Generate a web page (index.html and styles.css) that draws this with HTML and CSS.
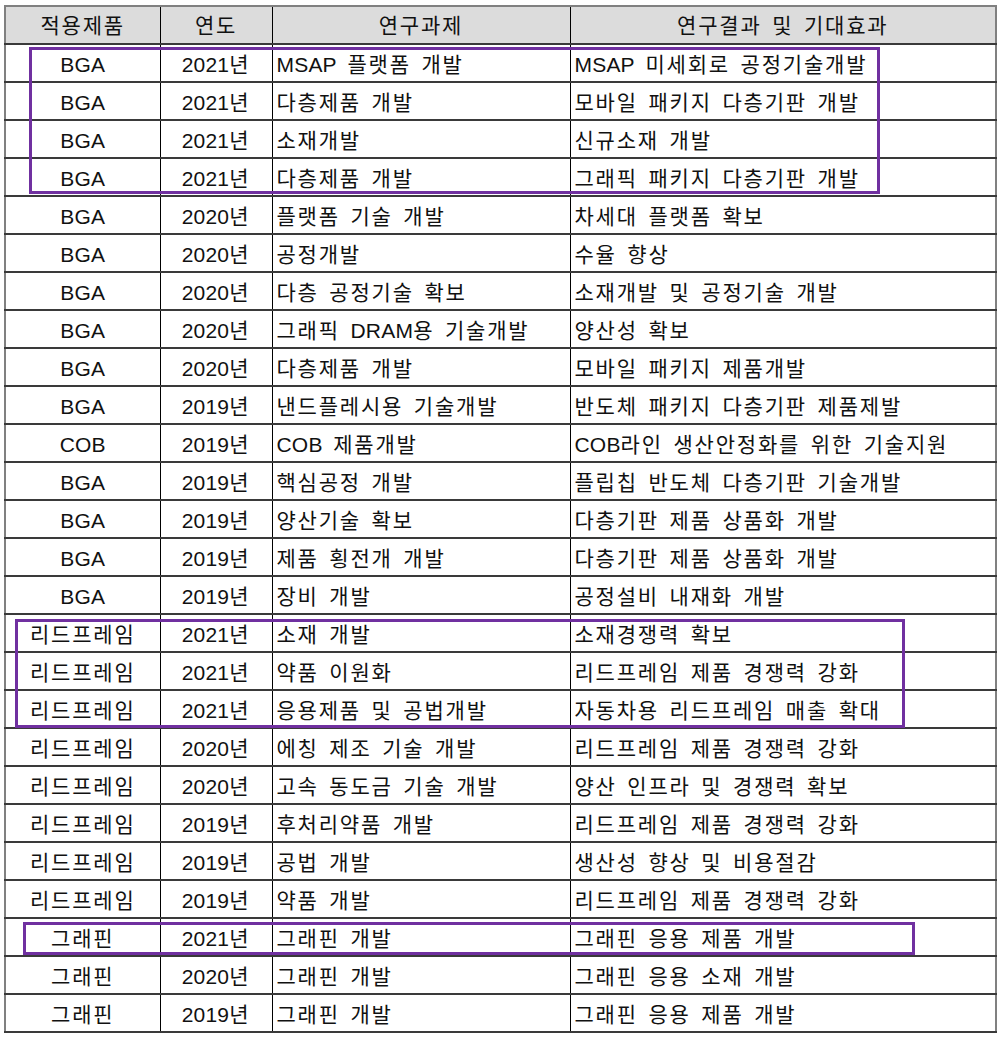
FILE: index.html
```html
<!DOCTYPE html>
<html lang="ko">
<head>
<meta charset="utf-8">
<link rel="stylesheet" href="styles.css">
</head>
<body>
<div class="wrap">
<table class="grid">
<colgroup><col class="c1"><col class="c2"><col class="c3"><col class="c4"></colgroup>
<thead>
<tr><th>적용제품</th><th>연도</th><th>연구과제</th><th>연구결과 및 기대효과</th></tr>
</thead>
<tbody>
<tr><td><span class="lat">BGA</span></td><td><span class="lat">2021</span>년</td><td><span class="lat">MSAP</span> 플랫폼 개발</td><td><span class="lat">MSAP</span> 미세회로 공정기술개발</td></tr>
<tr><td><span class="lat">BGA</span></td><td><span class="lat">2021</span>년</td><td>다층제품 개발</td><td>모바일 패키지 다층기판 개발</td></tr>
<tr><td><span class="lat">BGA</span></td><td><span class="lat">2021</span>년</td><td>소재개발</td><td>신규소재 개발</td></tr>
<tr><td><span class="lat">BGA</span></td><td><span class="lat">2021</span>년</td><td>다층제품 개발</td><td>그래픽 패키지 다층기판 개발</td></tr>
<tr><td><span class="lat">BGA</span></td><td><span class="lat">2020</span>년</td><td>플랫폼 기술 개발</td><td>차세대 플랫폼 확보</td></tr>
<tr><td><span class="lat">BGA</span></td><td><span class="lat">2020</span>년</td><td>공정개발</td><td>수율 향상</td></tr>
<tr><td><span class="lat">BGA</span></td><td><span class="lat">2020</span>년</td><td>다층 공정기술 확보</td><td>소재개발 및 공정기술 개발</td></tr>
<tr><td><span class="lat">BGA</span></td><td><span class="lat">2020</span>년</td><td>그래픽 <span class="lat">DRAM</span>용 기술개발</td><td>양산성 확보</td></tr>
<tr><td><span class="lat">BGA</span></td><td><span class="lat">2020</span>년</td><td>다층제품 개발</td><td>모바일 패키지 제품개발</td></tr>
<tr><td><span class="lat">BGA</span></td><td><span class="lat">2019</span>년</td><td>낸드플레시용 기술개발</td><td>반도체 패키지 다층기판 제품제발</td></tr>
<tr><td><span class="lat">COB</span></td><td><span class="lat">2019</span>년</td><td><span class="lat">COB</span> 제품개발</td><td><span class="lat">COB</span>라인 생산안정화를 위한 기술지원</td></tr>
<tr><td><span class="lat">BGA</span></td><td><span class="lat">2019</span>년</td><td>핵심공정 개발</td><td>플립칩 반도체 다층기판 기술개발</td></tr>
<tr><td><span class="lat">BGA</span></td><td><span class="lat">2019</span>년</td><td>양산기술 확보</td><td>다층기판 제품 상품화 개발</td></tr>
<tr><td><span class="lat">BGA</span></td><td><span class="lat">2019</span>년</td><td>제품 횡전개 개발</td><td>다층기판 제품 상품화 개발</td></tr>
<tr><td><span class="lat">BGA</span></td><td><span class="lat">2019</span>년</td><td>장비 개발</td><td>공정설비 내재화 개발</td></tr>
<tr><td>리드프레임</td><td><span class="lat">2021</span>년</td><td>소재 개발</td><td>소재경쟁력 확보</td></tr>
<tr><td>리드프레임</td><td><span class="lat">2021</span>년</td><td>약품 이원화</td><td>리드프레임 제품 경쟁력 강화</td></tr>
<tr><td>리드프레임</td><td><span class="lat">2021</span>년</td><td>응용제품 및 공법개발</td><td>자동차용 리드프레임 매출 확대</td></tr>
<tr><td>리드프레임</td><td><span class="lat">2020</span>년</td><td>에칭 제조 기술 개발</td><td>리드프레임 제품 경쟁력 강화</td></tr>
<tr><td>리드프레임</td><td><span class="lat">2020</span>년</td><td>고속 동도금 기술 개발</td><td>양산 인프라 및 경쟁력 확보</td></tr>
<tr><td>리드프레임</td><td><span class="lat">2019</span>년</td><td>후처리약품 개발</td><td>리드프레임 제품 경쟁력 강화</td></tr>
<tr><td>리드프레임</td><td><span class="lat">2019</span>년</td><td>공법 개발</td><td>생산성 향상 및 비용절감</td></tr>
<tr><td>리드프레임</td><td><span class="lat">2019</span>년</td><td>약품 개발</td><td>리드프레임 제품 경쟁력 강화</td></tr>
<tr><td>그래핀</td><td><span class="lat">2021</span>년</td><td>그래핀 개발</td><td>그래핀 응용 제품 개발</td></tr>
<tr><td>그래핀</td><td><span class="lat">2020</span>년</td><td>그래핀 개발</td><td>그래핀 응용 소재 개발</td></tr>
<tr><td>그래핀</td><td><span class="lat">2019</span>년</td><td>그래핀 개발</td><td>그래핀 응용 제품 개발</td></tr>
</tbody>
</table>
<div class="mark mark-bga"></div>
<div class="mark mark-lf"></div>
<div class="mark mark-gr"></div>
</div>
</body>
</html>
```

FILE: styles.css
```css
html, body {
  margin: 0;
  padding: 0;
  background: #ffffff;
}

.wrap {
  position: relative;
  width: 991px;
  margin: 5px 0 0 4px;
}

.grid {
  border-collapse: collapse;
  table-layout: fixed;
  width: 991px;
  border: 2px solid #808080;
  font-family: "Liberation Sans", "Noto Sans CJK KR", sans-serif;
  font-size: 21px;
  letter-spacing: 1.8px;
  word-spacing: 3px;
  color: #111111;
}

.lat {
  letter-spacing: 0.2px;
}

.c1 { width: 155px; }
.c2 { width: 112px; }
.c3 { width: 298px; }
.c4 { width: 426px; }

.grid th,
.grid td {
  height: 33px;
  padding: 3px 0 0 0;
  border-bottom: 2px solid #3a3a3a;
  border-left: 1px solid #000000;
  white-space: nowrap;
  overflow: hidden;
  line-height: 33px;
}

.grid th {
  background: #dcdcdc;
  font-weight: normal;
  text-align: center;
  padding-top: 1px;
  height: 35px;
  line-height: 35px;
}

.grid td:nth-child(1),
.grid td:nth-child(2) {
  text-align: center;
}

.grid td:nth-child(3),
.grid td:nth-child(4) {
  text-align: left;
  padding-left: 4px;
}

.mark {
  position: absolute;
  border: 3px solid #7030a0;
  box-sizing: border-box;
}

.mark-bga {
  left: 25px;
  top: 42px;
  width: 851px;
  height: 147px;
}

.mark-lf {
  left: 11px;
  top: 614px;
  width: 890px;
  height: 109px;
}

.mark-gr {
  left: 19px;
  top: 917px;
  width: 892px;
  height: 33px;
}
```
